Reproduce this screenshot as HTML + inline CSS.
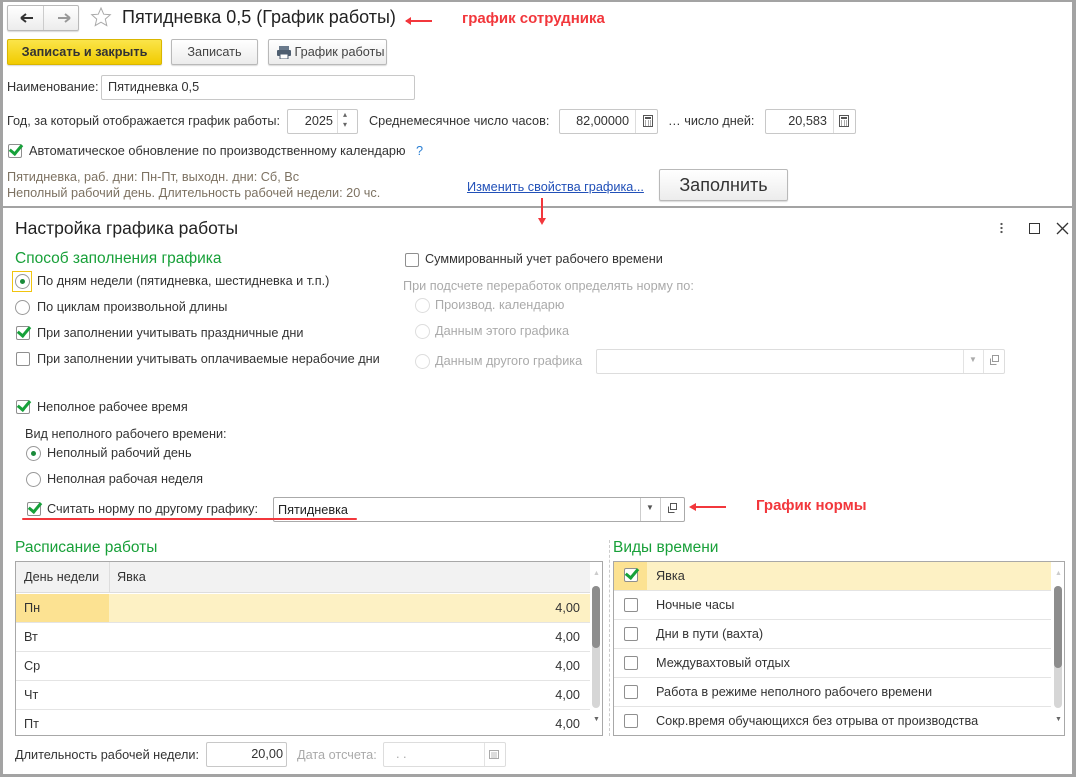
<!DOCTYPE html>
<html><head><meta charset="utf-8"><style>
*{box-sizing:border-box;margin:0;padding:0}
body{width:1076px;height:777px;overflow:hidden;background:#fff;font-family:"Liberation Sans",Arial,sans-serif;font-size:12.7px;color:#333;position:relative}
.frame{position:absolute;left:0;top:0;width:1076px;height:777px;border:solid #a3a3a3;border-width:2px 4px 3px 3px}
.a{position:absolute;white-space:nowrap}
.btn{position:absolute;border:1px solid #b9b9b9;border-radius:2px;background:linear-gradient(#fff,#ececec);text-align:center;color:#444;box-shadow:0 1px 1px rgba(0,0,0,.15)}
.inp{position:absolute;border:1px solid #c8c8c8;border-radius:2px;background:#fff;height:25px}
.g{color:#18a039;font-size:15.5px}
.cb{position:absolute;width:14px;height:14px;border:1px solid #8f8f8f;border-radius:2px;background:#fff}
.cb.on::after{content:"";position:absolute;left:3px;top:-3px;width:5px;height:10px;border:solid #17a13a;border-width:0 3px 3px 0;transform:rotate(40deg)}
.rd{position:absolute;width:15px;height:15px;border:1px solid #999;border-radius:50%;background:#fff}
.rd.on::after{content:"";position:absolute;left:4px;top:4px;width:5px;height:5px;border-radius:50%;background:#1a8a3a}
.rd.dis{border-color:#ddd}
.gray{color:#aaa}
.tbl{position:absolute;border:1px solid #a8a8a8;overflow:hidden}
.row{position:absolute;left:0;height:29px;border-bottom:1px solid #e4e4e4;line-height:28px}
.red{color:#f2373c;font-weight:bold;font-size:15px}
</style></head><body>
<div class="frame"></div>

<!-- nav -->
<div class="btn" style="left:7px;top:5px;width:72px;height:26px"></div>
<div class="a" style="left:43px;top:6px;width:1px;height:24px;background:#ccc"></div>
<svg class="a" style="left:18px;top:11px" width="55" height="14"><path d="M3 7h12M3 7l5-4M3 7l5 4" stroke="#333" stroke-width="2" fill="none"/><path d="M40 7h12M52 7l-5-4M52 7l-5 4" stroke="#999" stroke-width="2" fill="none"/></svg>
<svg class="a" style="left:90px;top:6px" width="22" height="22"><path d="M11 2l2.7 6.2 6.6.5-5 4.4 1.5 6.5L11 16.2 5.2 19.6l1.5-6.5-5-4.4 6.6-.5z" fill="none" stroke="#aaa" stroke-width="1"/></svg>
<div class="a" style="left:122px;top:7px;font-size:18px;color:#222">Пятидневка 0,5 (График работы)</div>
<svg class="a" style="left:404px;top:16px" width="30" height="10"><path d="M2 5h26" stroke="#f2373c" stroke-width="2"/><path d="M1 5l6-4v8z" fill="#f2373c"/></svg>
<div class="a red" style="left:462px;top:10px">график сотрудника</div>

<div class="btn" style="left:7px;top:39px;width:155px;height:26px;background:linear-gradient(#fbe54a,#f1cb00);border-color:#d9b600;color:#333;font-weight:bold;line-height:24px">Записать и закрыть</div>
<div class="btn" style="left:171px;top:39px;width:87px;height:26px;line-height:24px">Записать</div>
<div class="btn" style="left:268px;top:39px;width:119px;height:26px;line-height:24px;padding-left:24px">График работы</div>
<svg class="a" style="left:276px;top:45px" width="16" height="14"><rect x="3" y="1" width="10" height="4" fill="#6a7a8c"/><rect x="1" y="5" width="14" height="6" rx="1" fill="#4e5e70"/><rect x="4" y="9" width="8" height="5" fill="#fff" stroke="#4e5e70"/></svg>

<div class="a" style="left:7px;top:80px">Наименование:</div>
<div class="inp" style="left:101px;top:75px;width:314px;padding:4px 6px">Пятидневка 0,5</div>

<div class="a" style="left:7px;top:114px">Год, за который отображается график работы:</div>
<div class="inp" style="left:287px;top:109px;width:71px"><span class="a" style="right:24px;top:4px">2025</span></div>
<div class="a" style="left:337px;top:110px;width:1px;height:23px;background:#ddd"></div>
<div class="a" style="left:343px;top:110px;font-size:8px;color:#666;line-height:10px">▴<br>▾</div>
<div class="a" style="left:369px;top:114px">Среднемесячное число часов:</div>
<div class="inp" style="left:559px;top:109px;width:99px"><span class="a" style="right:28px;top:4px">82,00000</span><span class="a" style="left:75px;top:0;width:1px;height:23px;background:#ddd"></span></div>
<div class="a" style="left:668px;top:114px">… число дней:</div>
<div class="inp" style="left:765px;top:109px;width:91px"><span class="a" style="right:28px;top:4px">20,583</span><span class="a" style="left:67px;top:0;width:1px;height:23px;background:#ddd"></span></div>
<svg class="a" style="left:643px;top:115px" width="10" height="12"><rect x=".5" y=".5" width="9" height="11" fill="none" stroke="#555"/><rect x="2" y="2" width="6" height="2" fill="#555"/><path d="M2 6h1M5 6h1M7 6h1M2 8h1M5 8h1M7 8h1M2 10h1M5 10h1M7 10h1" stroke="#555"/></svg>
<svg class="a" style="left:839px;top:115px" width="10" height="12"><rect x=".5" y=".5" width="9" height="11" fill="none" stroke="#555"/><rect x="2" y="2" width="6" height="2" fill="#555"/><path d="M2 6h1M5 6h1M7 6h1M2 8h1M5 8h1M7 8h1M2 10h1M5 10h1M7 10h1" stroke="#555"/></svg>

<div class="cb on" style="left:8px;top:144px"></div>
<div class="a" style="left:29px;top:144px">Автоматическое обновление по производственному календарю</div>
<div class="a" style="left:416px;top:144px;color:#2a7fd4">?</div>

<div class="a" style="left:7px;top:170px;color:#7d7262">Пятидневка, раб. дни: Пн-Пт, выходн. дни: Сб, Вс</div>
<div class="a" style="left:7px;top:186px;color:#7d7262">Неполный рабочий день. Длительность рабочей недели: 20 чс.</div>
<div class="a" style="left:467px;top:180px;color:#2150b8;text-decoration:underline">Изменить свойства графика...</div>
<div class="btn" style="left:659px;top:169px;width:129px;height:32px;line-height:30px;font-size:18px;color:#333">Заполнить</div>

<!-- dialog -->
<div class="a" style="left:0;top:206px;width:1076px;height:2px;background:#a3a3a3"></div>
<svg class="a" style="left:537px;top:197px" width="10" height="30"><path d="M5 1v22" stroke="#f2373c" stroke-width="2"/><path d="M1 21h8l-4 7z" fill="#f2373c"/></svg>
<div class="a" style="left:15px;top:218px;font-size:17.5px;color:#222">Настройка графика работы</div>
<div class="a" style="left:1000px;top:222px;width:3px;height:12px;background:radial-gradient(circle,#555 1px,transparent 1.3px) 0 0/3px 4px"></div>
<div class="a" style="left:1029px;top:223px;width:11px;height:11px;border:1.5px solid #333"></div>
<svg class="a" style="left:1056px;top:222px" width="13" height="13"><path d="M1 1l11 11M12 1L1 12" stroke="#333" stroke-width="1.3"/></svg>

<div class="a g" style="left:15px;top:250px">Способ заполнения графика</div>
<div class="a" style="left:12px;top:271px;width:20px;height:21px;border:1px solid #f1c40f"></div>
<div class="rd on" style="left:15px;top:274px"></div>
<div class="a" style="left:37px;top:274px">По дням недели (пятидневка, шестидневка и т.п.)</div>
<div class="rd" style="left:15px;top:300px"></div>
<div class="a" style="left:37px;top:300px">По циклам произвольной длины</div>
<div class="cb on" style="left:16px;top:326px"></div>
<div class="a" style="left:37px;top:326px">При заполнении учитывать праздничные дни</div>
<div class="cb" style="left:16px;top:352px"></div>
<div class="a" style="left:37px;top:352px">При заполнении учитывать оплачиваемые нерабочие дни</div>
<div class="cb on" style="left:16px;top:400px"></div>
<div class="a" style="left:37px;top:400px">Неполное рабочее время</div>
<div class="a" style="left:25px;top:427px">Вид неполного рабочего времени:</div>
<div class="rd on" style="left:26px;top:446px"></div>
<div class="a" style="left:47px;top:446px">Неполный рабочий день</div>
<div class="rd" style="left:26px;top:472px"></div>
<div class="a" style="left:47px;top:472px">Неполная рабочая неделя</div>
<div class="cb on" style="left:27px;top:502px"></div>
<div class="a" style="left:47px;top:502px">Считать норму по другому графику:</div>
<div class="inp" style="left:273px;top:497px;width:412px;border-color:#aaa"><span class="a" style="left:4px;top:5px;color:#222">Пятидневка</span><span class="a" style="left:366px;top:0;width:1px;height:23px;background:#ccc"></span><span class="a" style="left:386px;top:0;width:1px;height:23px;background:#ccc"></span><span class="a" style="left:372px;top:5px;font-size:8px;color:#555">▼</span></div>
<svg class="a" style="left:667px;top:503px" width="11" height="11"><rect x="3.5" y=".5" width="6" height="6" fill="none" stroke="#555"/><path d="M1.5 3.5v6h6" fill="none" stroke="#555"/></svg>
<div class="a" style="left:22px;top:518px;width:335px;height:2px;background:#f2373c;border-radius:1px"></div>
<svg class="a" style="left:688px;top:502px" width="40" height="10"><path d="M4 5h34" stroke="#f2373c" stroke-width="2"/><path d="M1 5l7-4v8z" fill="#f2373c"/></svg>
<div class="a red" style="left:756px;top:497px">График нормы</div>

<div class="cb" style="left:405px;top:253px"></div>
<div class="a" style="left:425px;top:252px">Суммированный учет рабочего времени</div>
<div class="a gray" style="left:403px;top:279px">При подсчете переработок определять норму по:</div>
<div class="rd dis" style="left:415px;top:298px"></div><div class="a gray" style="left:435px;top:298px">Производ. календарю</div>
<div class="rd dis" style="left:415px;top:324px"></div><div class="a gray" style="left:435px;top:324px">Данным этого графика</div>
<div class="rd dis" style="left:415px;top:354px"></div><div class="a gray" style="left:435px;top:354px">Данным другого графика</div>
<div class="inp" style="left:596px;top:349px;width:409px;border-color:#ddd"><span class="a" style="left:366px;top:0;width:1px;height:23px;background:#e3e3e3"></span><span class="a" style="left:386px;top:0;width:1px;height:23px;background:#e3e3e3"></span><span class="a" style="left:372px;top:5px;font-size:8px;color:#aaa">▼</span></div>
<svg class="a" style="left:989px;top:355px" width="11" height="11"><rect x="3.5" y=".5" width="6" height="6" fill="none" stroke="#999"/><path d="M1.5 3.5v6h6" fill="none" stroke="#999"/></svg>

<div class="a" style="left:609px;top:540px;width:1px;height:196px;border-left:1px dashed #ccc"></div>

<!-- schedule table -->
<div class="a g" style="left:15px;top:539px">Расписание работы</div>
<div class="tbl" style="left:15px;top:561px;width:588px;height:175px">
  <div class="row" style="top:0;height:31px;width:574px;background:#f2f2f2;border-bottom:1px solid #ddd;line-height:30px"><span class="a" style="left:8px">День недели</span><span class="a" style="left:93px;top:0;width:1px;height:31px;background:#ddd"></span><span class="a" style="left:101px">Явка</span></div>
  <div class="row" style="top:32px;width:574px;background:#fdf1c4"><span class="a" style="left:0;top:0;width:93px;height:28px;background:#fce292"></span><span class="a" style="left:8px">Пн</span><span class="a" style="right:10px">4,00</span></div>
  <div class="row" style="top:61px;width:574px"><span class="a" style="left:8px">Вт</span><span class="a" style="right:10px">4,00</span></div>
  <div class="row" style="top:90px;width:574px"><span class="a" style="left:8px">Ср</span><span class="a" style="right:10px">4,00</span></div>
  <div class="row" style="top:119px;width:574px"><span class="a" style="left:8px">Чт</span><span class="a" style="right:10px">4,00</span></div>
  <div class="row" style="top:148px;width:574px;border:0"><span class="a" style="left:8px">Пт</span><span class="a" style="right:10px">4,00</span></div>
  <div class="a" style="left:576px;top:24px;width:8px;height:122px;background:#d6d6d6;border-radius:4px"></div>
  <div class="a" style="left:576px;top:24px;width:8px;height:62px;background:#8d8d8d;border-radius:4px"></div>
  <div class="a" style="left:577px;top:8px;font-size:7px;color:#ccc">▲</div>
  <div class="a" style="left:577px;top:154px;font-size:7px;color:#666">▼</div>
</div>

<!-- time types -->
<div class="a g" style="left:613px;top:539px">Виды времени</div>
<div class="tbl" style="left:613px;top:561px;width:452px;height:175px">
  <div class="row" style="top:0;width:437px;background:#fdf1c4"><span class="a" style="left:0;top:0;width:33px;height:28px;background:#fce292"></span><span class="a" style="left:42px">Явка</span></div>
  <div class="row" style="top:29px;width:437px"><span class="a" style="left:42px">Ночные часы</span></div>
  <div class="row" style="top:58px;width:437px"><span class="a" style="left:42px">Дни в пути (вахта)</span></div>
  <div class="row" style="top:87px;width:437px"><span class="a" style="left:42px">Междувахтовый отдых</span></div>
  <div class="row" style="top:116px;width:437px"><span class="a" style="left:42px">Работа в режиме неполного рабочего времени</span></div>
  <div class="row" style="top:145px;width:437px;border:0"><span class="a" style="left:42px">Сокр.время обучающихся без отрыва от производства</span></div>
  <div class="cb on" style="left:10px;top:6px"></div>
  <div class="cb" style="left:10px;top:36px"></div>
  <div class="cb" style="left:10px;top:65px"></div>
  <div class="cb" style="left:10px;top:94px"></div>
  <div class="cb" style="left:10px;top:123px"></div>
  <div class="cb" style="left:10px;top:152px"></div>
  <div class="a" style="left:440px;top:24px;width:8px;height:122px;background:#d6d6d6;border-radius:4px"></div>
  <div class="a" style="left:440px;top:24px;width:8px;height:82px;background:#8d8d8d;border-radius:4px"></div>
  <div class="a" style="left:441px;top:8px;font-size:7px;color:#ccc">▲</div>
  <div class="a" style="left:441px;top:154px;font-size:7px;color:#666">▼</div>
</div>

<div class="a" style="left:15px;top:748px">Длительность рабочей недели:</div>
<div class="inp" style="left:206px;top:742px;width:81px"><span class="a" style="right:3px;top:4px">20,00</span></div>
<div class="a gray" style="left:297px;top:748px">Дата отсчета:</div>
<div class="inp" style="left:383px;top:742px;width:123px;border-color:#ddd"><span class="a gray" style="left:12px;top:4px">. .</span><span class="a" style="left:100px;top:0;width:1px;height:23px;background:#e3e3e3"></span></div>
<svg class="a" style="left:489px;top:749px" width="10" height="10"><rect x=".5" y="1.5" width="9" height="8" fill="none" stroke="#aaa"/><path d="M2 4h6M2 6h6M2 8h6" stroke="#bbb"/></svg>
</body></html>
